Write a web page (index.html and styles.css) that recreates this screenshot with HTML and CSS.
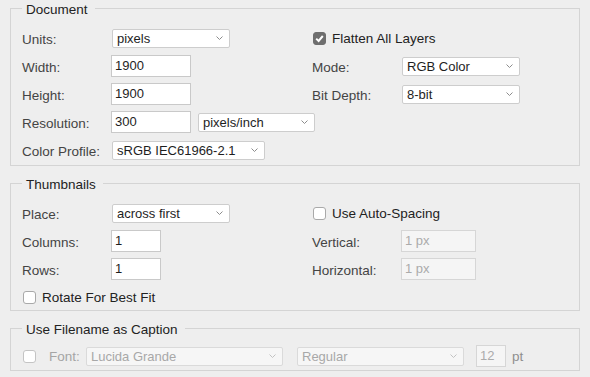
FILE: index.html
```html
<!DOCTYPE html>
<html>
<head>
  <meta charset="UTF-8">
  <title>Contact Sheet</title>
  <link rel="stylesheet" href="styles.css">
</head>
<body>
  <!-- Documento -->
  <fieldset class="group group-doc">
    <legend>Document</legend>
    <div class="form-grid">
      <label class="lbl">Units:</label>
      <div class="select w-118">pixels<svg class="chev" width="7" height="4"><polyline points="0.5,0.5 3.5,3.5 6.5,0.5"/></svg></div>
      <div class="check wide"><span class="box on"><svg width="13" height="13"><path d="M3.2 6.6 L5.6 9 L9.8 4"/></svg></span>Flatten All Layers</div>

      <label class="lbl">Width:</label>
      <input class="field w-80" type="text" value="1900">
      <label class="lbl">Mode:</label>
      <div class="select w-118">RGB Color<svg class="chev" width="7" height="4"><polyline points="0.5,0.5 3.5,3.5 6.5,0.5"/></svg></div>

      <label class="lbl">Height:</label>
      <input class="field w-80" type="text" value="1900">
      <label class="lbl">Bit Depth:</label>
      <div class="select w-118">8-bit<svg class="chev" width="7" height="4"><polyline points="0.5,0.5 3.5,3.5 6.5,0.5"/></svg></div>

      <label class="lbl">Resolution:</label>
      <div class="pair">
        <input class="field w-80" type="text" value="300">
        <div class="select w-117">pixels/inch<svg class="chev" width="7" height="4"><polyline points="0.5,0.5 3.5,3.5 6.5,0.5"/></svg></div>
      </div>
      <div class="spacer wide"></div>

      <label class="lbl">Color Profile:</label>
      <div class="select w-153">sRGB IEC61966-2.1<svg class="chev" width="7" height="4"><polyline points="0.5,0.5 3.5,3.5 6.5,0.5"/></svg></div>
      <div class="spacer wide"></div>
    </div>
  </fieldset>

  <!-- Miniaturas -->
  <fieldset class="group group-thumbs">
    <legend>Thumbnails</legend>
    <div class="form-grid">
      <label class="lbl">Place:</label>
      <div class="select w-118">across first<svg class="chev" width="7" height="4"><polyline points="0.5,0.5 3.5,3.5 6.5,0.5"/></svg></div>
      <div class="check wide"><span class="box"></span>Use Auto-Spacing</div>

      <label class="lbl">Columns:</label>
      <input class="field w-50" type="text" value="1">
      <label class="lbl">Vertical:</label>
      <input class="field w-75" type="text" value="1 px" disabled>

      <label class="lbl">Rows:</label>
      <input class="field w-50" type="text" value="1">
      <label class="lbl">Horizontal:</label>
      <input class="field w-75" type="text" value="1 px" disabled>

      <div class="check wide first"><span class="box"></span>Rotate For Best Fit</div>
    </div>
  </fieldset>

  <!-- Caption -->
  <fieldset class="group group-caption">
    <legend>Use Filename as Caption</legend>
    <div class="caption-row">
      <span class="box off"></span>
      <label class="lbl-off">Font:</label>
      <div class="select off w-197">Lucida Grande<svg class="chev" width="7" height="4"><polyline points="0.5,0.5 3.5,3.5 6.5,0.5"/></svg></div>
      <div class="select off w-167">Regular<svg class="chev" width="7" height="4"><polyline points="0.5,0.5 3.5,3.5 6.5,0.5"/></svg></div>
      <input class="field w-30" type="text" value="12" disabled>
      <span class="unit">pt</span>
    </div>
  </fieldset>
</body>
</html>
```

FILE: styles.css
```css
/* Estilos generales */
body {
  margin: 0;
  padding: 0 10px;
  background-color: #eeeeee;
  font-family: "Liberation Sans", Arial, sans-serif;
  font-size: 13px;
  color: #1e1e1e;
}

/* Grupos */
.group {
  margin: 0;
  padding: 10px 11px 4px;
  border: 1px solid #d4d4d4;
  min-width: 0;
}

.group + .group {
  margin-top: 9px;
}

.group legend {
  padding: 3px 7px 0 4px;
  line-height: 14px;
  font-size: 13.5px;
  color: #222;
}

.group-thumbs {
  padding-bottom: 2px;
}

.group-caption {
  padding-top: 8px;
  padding-bottom: 3px;
}

/* Rejilla del formulario */
.form-grid {
  display: grid;
  grid-template-columns: 89px 201px 89px 1fr;
  grid-auto-rows: 22px;
  row-gap: 6px;
  align-items: center;
}

.lbl {
  font-size: 13.5px;
  color: #444;
  line-height: 16px;
  padding-top: 3px;
}

.pair {
  display: flex;
  align-items: center;
  gap: 7px;
}

.pair > * {
  flex: none;
}

.wide {
  grid-column: span 2;
}

.first {
  grid-column: 1 / span 2;
}

/* Controles */
.select {
  box-sizing: border-box;
  height: 19px;
  margin-left: 1px;
  padding: 0 6px 0 4px;
  display: flex;
  align-items: center;
  justify-content: space-between;
  background-color: #fff;
  border: 1px solid #cdcdcd;
  border-radius: 2px;
  line-height: 17px;
  white-space: nowrap;
}

.pair .select {
  margin-left: 0;
}

.chev polyline {
  fill: none;
  stroke: #8c8c8c;
  stroke-width: 1;
}

.select.off {
  background-color: #f6f6f6;
  border-color: #dadada;
  color: #a8a8a8;
}

.select.off .chev polyline {
  stroke: #c2c2c2;
}

.field {
  box-sizing: border-box;
  height: 22px;
  margin: 0;
  padding: 0 3px 2px;
  font-family: inherit;
  font-size: 13px;
  color: #1e1e1e;
  background-color: #fff;
  border: 1px solid #c9c9c9;
  border-radius: 0;
  outline: none;
}

.field:disabled {
  background-color: #f5f5f5;
  border-color: #d6d6d6;
  color: #ababab;
}

.w-30 { width: 30px; }
.w-50 { width: 50px; }
.w-75 { width: 75px; }
.w-80 { width: 80px; }
.w-117 { width: 117px; }
.w-118 { width: 118px; }
.w-153 { width: 153px; }
.w-167 { width: 167px; }
.w-197 { width: 197px; }

/* Casillas */
.check {
  display: flex;
  align-items: center;
  gap: 6px;
  margin-left: 1px;
  font-size: 13.5px;
  color: #222;
}

.box {
  box-sizing: border-box;
  width: 13px;
  height: 13px;
  flex: none;
  background-color: #fff;
  border: 1px solid #a9a9a9;
  border-radius: 3px;
}

.box.on {
  background-color: #6e6e6e;
  border-color: #6e6e6e;
}

.box.on svg {
  display: block;
  margin: -1px;
}

.box.on path {
  fill: none;
  stroke: #fff;
  stroke-width: 2;
}

.box.off {
  border-color: #c4c4c4;
}

/* Fila del pie */
.caption-row {
  display: flex;
  align-items: center;
  height: 22px;
  padding-left: 1px;
}

.lbl-off {
  margin-left: 13px;
  width: 37px;
  color: #a5a5a5;
  font-size: 13.5px;
}

.caption-row .select {
  margin-left: 0;
}

.caption-row .w-167 {
  margin-left: 14px;
}

.caption-row .field {
  margin-left: 12px;
}

.unit {
  margin-left: 6px;
  color: #8e8e8e;
  font-size: 13.5px;
}
```
